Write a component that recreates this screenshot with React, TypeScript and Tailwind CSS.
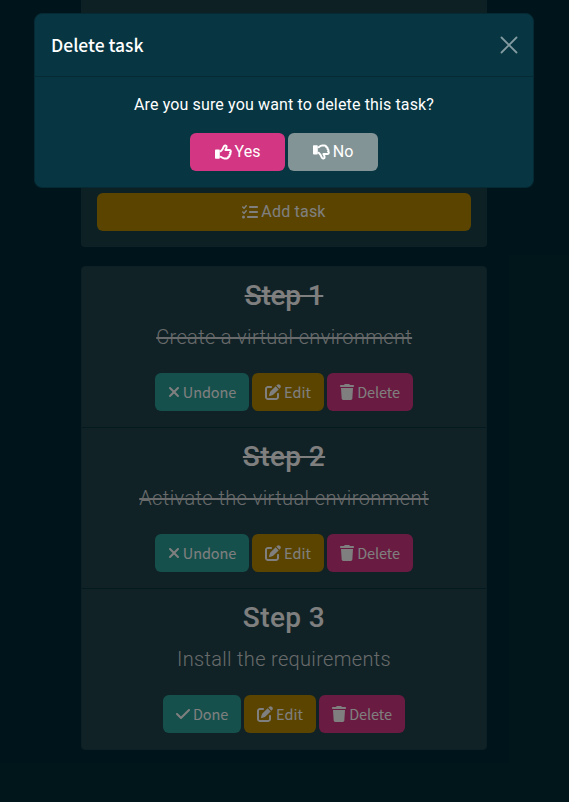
import type { ReactNode } from "react";
import { FaCheck, FaListCheck, FaPenToSquare, FaXmark } from "react-icons/fa6";

const sans = "font-['Noto_Sans_CJK_JP',sans-serif]";

const tasks = [
  { title: "Step 1", text: "Create a virtual environment", done: true, titleSpacing: "tracking-[-0.2px]", textSpacing: "tracking-[0.34px] indent-[0.34px]" },
  { title: "Step 2", text: "Activate the virtual environment", done: true, titleSpacing: "tracking-[0.4px]", textSpacing: "tracking-[0.4px]" },
  { title: "Step 3", text: "Install the requirements", done: false, titleSpacing: "tracking-[0.4px]", textSpacing: "tracking-[0.32px]" },
];

function ThumbsUp({ className = "" }: { className?: string }) {
  return (
    <svg className={`h-4 w-[17px] ${className}`} viewBox="0 0 17 16" fill="none">
      <rect x="0" y="5.5" width="4.8" height="9.2" rx="0.8" fill="currentColor" />
      <path d="M5.7 7.3C7.6 5.9 8.2 4.2 8.8 2.5C9.4 .9 11.8 1.3 11.6 3C11.5 4.2 10.9 5.1 10.4 6H14.5C16.1 6 16.2 8 15.1 8.6C15.8 9.5 15.4 10.8 14.4 11C14.7 12.1 14.2 13 13.2 13.1C13.1 14.2 12.4 14.4 11.5 14.4H9.4C7.8 14.4 6.8 13.7 5.7 12.8" stroke="currentColor" strokeWidth="2" strokeLinecap="round" strokeLinejoin="round" />
    </svg>
  );
}

function Trash() {
  return (
    <svg className="h-4 w-3.5" viewBox="0 0 448 512" fill="currentColor">
      <path d="M136 18l-7 14H24C10 32 0 42 0 56v16c0 13 10 24 24 24h400c14 0 24-11 24-24V56c0-14-10-24-24-24H319l-7-14C306 7 295 0 283 0H165c-12 0-23 7-29 18zM416 128H32l21 339c2 25 23 45 48 45h246c25 0 46-20 48-45z" />
    </svg>
  );
}

function Button({ className, icon, children }: { className: string; icon: ReactNode; children: ReactNode }) {
  return (
    <button className={`flex h-[38px] items-center justify-center gap-[3px] whitespace-nowrap rounded-md text-white ${className}`}>
      {icon}
      <span>{children}</span>
    </button>
  );
}

function Modal() {
  return (
    <div className="absolute left-[34px] top-[13px] h-[175px] w-[500px] rounded-lg border border-[#052a34] bg-[#073642] text-white">
      <div className="flex h-[63px] items-center justify-between border-b border-[#052a34] pl-4 pr-[15px]">
        <h5 className={`${sans} text-[17.5px] font-medium leading-[30px]`}>Delete task</h5>
        <svg className="size-[18px]" viewBox="0 0 18 18" fill="none" stroke="#839ba1" strokeWidth="1.8" strokeLinecap="round">
          <path d="M1.5 1.5l15 15M16.5 1.5l-15 15" />
        </svg>
      </div>
      <div className="flex flex-col items-center pt-4">
        <p className="whitespace-nowrap text-[16px] leading-6 tracking-[0.14px]">Are you sure you want to delete this task?</p>
        <div className="mt-4 flex gap-[3px]">
          <Button className="w-[95px] bg-[#d33682]" icon={<ThumbsUp />}>Yes</Button>
          <Button className="w-[90px] bg-[#839496]" icon={<ThumbsUp className="-scale-y-100" />}>No</Button>
        </div>
      </div>
    </div>
  );
}

export default function App() {
  return (
    <div className="relative h-[802px] w-[569px] overflow-hidden bg-[#002b36] font-[Roboto,sans-serif]">
      <main className="ml-[81px] flex w-[406px] flex-col gap-[19px]">
        <section className="flex h-[247px] flex-col justify-end rounded-b bg-[#1b4248] p-4">
          <Button className="w-full bg-[#b58900] tracking-[0.2px]" icon={<FaListCheck className="size-4" />}>Add task</Button>
        </section>
        <ul className="h-[484px] overflow-hidden rounded border border-[#1b3f46] bg-[#20444c]">
          {tasks.map((task) => (
            <li key={task.title} className="flex h-[161px] flex-col items-center border-b border-[#06343c] pt-3 last:border-b-0">
              <h3 className={`whitespace-nowrap text-[28px] font-medium leading-[34px] text-white ${task.titleSpacing} ${task.done ? "line-through" : ""}`}>{task.title}</h3>
              <p className={`mt-[9px] whitespace-nowrap text-[20px] font-light leading-[30px] text-[#d0d5d6] ${task.textSpacing} ${task.done ? "line-through" : ""}`}>{task.text}</p>
              <div className={`mt-[21px] flex gap-[3px] text-[14.5px] ${sans}`}>
                {task.done ? (
                  <Button className="w-[94px] bg-[#2aa198] tracking-[-0.1px]" icon={<FaXmark className="h-4 w-3" />}>Undone</Button>
                ) : (
                  <Button className="w-[78px] bg-[#2aa198] tracking-[-0.1px]" icon={<FaCheck className="h-4 w-3.5" />}>Done</Button>
                )}
                <Button className="w-[72px] bg-[#b58900]" icon={<FaPenToSquare className="size-4" />}>Edit</Button>
                <Button className="w-[86px] bg-[#d33682] tracking-[-0.1px]" icon={<Trash />}>Delete</Button>
              </div>
            </li>
          ))}
        </ul>
      </main>
      <div className="absolute inset-0 bg-black/50" />
      <Modal />
    </div>
  );
}
